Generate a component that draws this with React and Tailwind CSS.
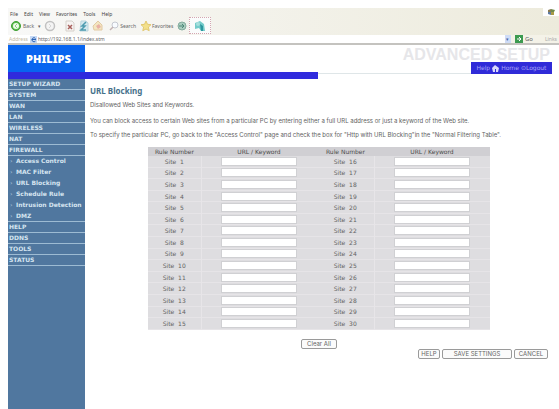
import { useState } from "react";

const menus = ["File", "Edit", "View", "Favorites", "Tools", "Help"];

const sections = [
  { name: "SETUP WIZARD" },
  { name: "SYSTEM" },
  { name: "WAN" },
  { name: "LAN" },
  { name: "WIRELESS" },
  { name: "NAT" },
  {
    name: "FIREWALL",
    items: [
      "Access Control",
      "MAC Filter",
      "URL Blocking",
      "Schedule Rule",
      "Intrusion Detection",
      "DMZ",
    ],
  },
  { name: "HELP" },
  { name: "DDNS" },
  { name: "TOOLS" },
  { name: "STATUS" },
];

const rows = Array.from({ length: 15 }, (_, i) => i + 1);

const BrowserBar = () => (
  <div className="pt-2 font-['Noto_Sans',sans-serif] text-[6px] leading-[8px] text-[#666]">
    <div className="bg-gradient-to-r from-[#f8f8f7] to-[#edebdc]">
      <div className="flex justify-between">
        <nav className="flex h-2 items-center gap-[6px] pl-[2px] pt-[3px] text-[5px] text-[#444]">
          {menus.map((m) => (
            <button key={m}>{m}</button>
          ))}
        </nav>
        <div className="flex h-2 w-4 items-center justify-center bg-white">
          <svg className="h-[6px] w-[7px]" viewBox="0 0 7 6">
            <path d="M0 1l3-1v3H0z" fill="#8a7a52" />
            <path d="M3 0l4 1-1 2H3z" fill="#6f8a4c" />
            <path d="M0 3h3v3L0 5z" fill="#5f7aa0" />
            <path d="M3 3h3v3H3z" fill="#a89a45" />
          </svg>
        </div>
      </div>

      <div className="flex h-[19px] items-center pl-[2px] text-[5px]">
        <button className="flex items-center gap-px">
          <svg className="size-3" viewBox="0 0 12 12">
            <circle cx="6" cy="6" r="4.500" fill="#5cbc4e" stroke="#3f9f35" />
            <circle cx="6" cy="6" r="3" fill="#eefaea" />
            <path d="M7 4L5 6l2 2" fill="none" stroke="#8fcf86" />
          </svg>
          Back
        </button>
        <span className="ml-1 w-1">▾</span>
        <button className="ml-[2px]" aria-label="Forward">
          <svg className="size-3" viewBox="0 0 12 12">
            <circle cx="6" cy="6" r="4.500" fill="#f4f4f4" stroke="#c2c2c2" strokeWidth="1.500" />
            <path d="M5 4l2 2-2 2" fill="none" stroke="#d6d6d6" />
          </svg>
        </button>
        <button className="ml-[9px]" aria-label="Stop">
          <svg className="h-3 w-[10px]" viewBox="0 0 10 12">
            <path d="M1 1h6l2 2v8H1z" fill="#f7f4f2" stroke="#d5d0ca" />
            <path d="M3 5l4 4M7 5L3 9" stroke="#a8605c" strokeWidth="1.500" />
          </svg>
        </button>
        <button className="ml-1" aria-label="Refresh">
          <svg className="h-3 w-[10px]" viewBox="0 0 10 12">
            <path d="M2 1h5l2 2v8H1z" fill="#d3e8ee" stroke="#b9d4de" />
            <path d="M7 2L3 6h3L2 10h5" fill="none" stroke="#4d9bb0" strokeWidth="1.500" />
          </svg>
        </button>
        <button className="ml-[3px]" aria-label="Home">
          <svg className="size-[11px]" viewBox="0 0 11 11">
            <path d="M1 6l5-5 4 4v5H2z" fill="#f3e6c0" stroke="#e2c9a4" />
            <path d="M4 6l3-2 2 3-3 2z" fill="#e9b0a4" />
          </svg>
        </button>
        <button className="ml-[6px] flex items-center gap-px">
          <svg className="size-[10px]" viewBox="0 0 10 10">
            <circle cx="6" cy="4" r="3" fill="#f8fbff" stroke="#c4c8d0" />
            <path d="M4 6L1 9" stroke="#c4b2b2" strokeWidth="1.500" />
          </svg>
          Search
        </button>
        <button className="ml-1 flex items-center">
          <svg className="size-3" viewBox="0 0 12 12">
            <path d="M6 1l1.500 3.300 3.500.4-2.600 2.400.8 3.600L6 9l-3.200 1.700.8-3.600L1 4.700l3.500-.4z" fill="#f3e08a" stroke="#e2c870" />
          </svg>
          Favorites
        </button>
        <button className="ml-1" aria-label="History">
          <svg className="size-[10px]" viewBox="0 0 10 10">
            <circle cx="5" cy="5" r="4" fill="#a9cdbf" stroke="#86ad9f" />
            <path d="M2 5h5L5 3M7 5L5 7" fill="none" stroke="#4c8676" />
          </svg>
        </button>
        <button className="ml-[2px] flex h-[17px] w-[22px] items-center justify-center border border-dotted border-[#d4a6b0] bg-[#fafcfc]" aria-label="Messenger">
          <svg className="size-3" viewBox="0 0 12 12">
            <path d="M1 3l5-2 4 3 1 7H7L5 8 1 9z" fill="#74cccb" />
            <path d="M6 4l3 2v5H7z" fill="#2c979f" />
            <circle cx="4" cy="4" r="2" fill="#a6e0dd" />
          </svg>
        </button>
      </div>
    </div>

    <div className="flex h-[8px] items-center bg-white">
      <label htmlFor="address" className="w-[22px] pl-px text-[5px] text-[#c4b9a4]">
        Address
      </label>
      <svg className="size-[7px]" viewBox="0 0 7 7">
        <path d="M0 0h7v7H0z" fill="#c7daf5" />
        <path d="M5.500 2.500a2 2 0 1 0 0 2.500M2 3.500h4" fill="none" stroke="#2e64b4" />
      </svg>
      <input
        id="address"
        defaultValue="http://192.168.1.1/index.stm"
        className="h-2 min-w-0 flex-1 bg-white px-[1px] text-[5px] outline-none"
      />
      <span className="w-[6px] bg-[#cfdcf6] text-center text-[5px] text-[#4668aa]">▾</span>
      <button className="flex h-2 items-center gap-[2px] bg-[#f4f2e8] pl-1">
        <svg className="size-[8px]" viewBox="0 0 8 8">
          <path d="M0 0h8v8H0z" fill="#3c9a50" />
          <path d="M2 4h4L4 2M6 4L4 6" fill="none" stroke="#fff" />
        </svg>
        Go
      </button>
      <button className="h-2 bg-[#f4f2e8] pl-3 pr-[2px] text-[5px] text-[#aaa]">Links</button>
    </div>
    <div className="h-[2px] bg-[#c4c3bf]" />
  </div>
);

const Header = () => (
  <header className="flex h-[34px]">
    <div className="flex w-[310px] flex-col">
      <div className="flex w-[77px] flex-1 items-center justify-center bg-[#0865f0] pl-1 font-['Noto_Sans',sans-serif] text-[11px] font-black leading-[12px] text-white">
        PHILIPS
      </div>
      <div className="h-[7px] bg-[#302bdd]" />
    </div>
    <div className="flex flex-1 flex-col items-end pr-[7px]">
      <h1 className="h-[17px] whitespace-nowrap pr-[2px] pt-px font-['Liberation_Sans',sans-serif] text-[16px] font-bold leading-[17px] text-[#e6e6e9]">
        ADVANCED SETUP
      </h1>
      <div className="flex w-full items-end">
        <div className="h-px flex-1 bg-[#dfe6e8]" />
        <nav className="flex h-3 w-[81px] items-center justify-center gap-[2px] bg-[#302bd8] text-[6px] leading-[12px] text-[#a9a6f7]">
          <a href="#help">Help</a>
          <svg className="size-[7px]" viewBox="0 0 7 7">
            <path d="M0 3l3-3 4 3-1 4H1z" fill="#d9d8fb" />
            <path d="M3 4h1v3H3z" fill="#302bd8" />
          </svg>
          <a href="#home">Home</a>
          <a href="#logout">⊙Logout</a>
        </nav>
      </div>
    </div>
  </header>
);

const Sidebar = () => (
  <aside className="w-[77px] shrink-0 bg-[#50779f] text-[6px] font-bold leading-[10px] text-[#d5e4f0]">
    {sections.map((s) => (
      <div key={s.name} className="border-b border-[#9dbbd3]">
        <a href="#section" className="block pl-px">
          {s.name}
        </a>
        {s.items && (
          <ul className="border-t border-[#9dbbd3]">
            {s.items.map((item, i) => (
              <li
                key={item}
                className={i === s.items.length - 1 ? "flex h-[10px]" : "flex h-[11px]"}
              >
                <span className="w-2 pl-[2px] text-[#a2bdd3]">›</span>
                <a href="#item" className="whitespace-nowrap">
                  {item}
                </a>
              </li>
            ))}
          </ul>
        )}
      </div>
    ))}
  </aside>
);

const SiteCells = ({ n, value, onChange }) => (
  <>
    <td className="border-r border-[#e7e5e8] p-0 text-center">
      <label htmlFor={`site-${n}`} className="whitespace-pre">
        {`Site  ${n}`}
      </label>
    </td>
    <td className="p-0 text-center">
      <input
        id={`site-${n}`}
        value={value}
        onChange={onChange}
        className="mx-auto block h-[9px] w-[76px] border border-[#d0d0d3] bg-white px-px outline-none"
      />
    </td>
  </>
);

const buttonStyle =
  "flex h-[10px] items-center justify-center rounded-[2px] border border-[#9a9a9a] bg-[#fbfbfb] text-[6px] leading-[8px] text-[#666]";

const App = () => {
  const [sites, setSites] = useState({});

  const update = (n) => (e) => setSites({ ...sites, [n]: e.target.value });

  return (
    <div className="flex min-h-screen flex-col bg-white pl-2 font-['DejaVu_Sans',sans-serif]">
      <BrowserBar />
      <Header />
      <div className="flex flex-1">
        <Sidebar />
        <main className="min-w-0 flex-1 pl-[5px] pr-[11px] font-['Inter',sans-serif] text-[6px] leading-[8px] text-[#626262]">
          <h2 className="pt-[7px] font-['Noto_Sans',sans-serif] text-[8px] font-bold leading-[10px] text-[#45708a]">
            URL Blocking
          </h2>
          <p className="mt-[5px]">Disallowed Web Sites and Keywords.</p>
          <p className="mt-2 whitespace-nowrap">
            You can block access to certain Web sites from a particular PC by entering either a full URL address or just a keyword of the Web site.
          </p>
          <p className="mt-[6px] whitespace-nowrap">
            To specify the particular PC, go back to the "Access Control" page and check the box for "Http with URL Blocking"in the "Normal Filtering Table".
          </p>

          <table className="ml-[58px] mt-2 h-[183px] w-[342px] table-fixed border-collapse bg-[#dedde0] font-['DejaVu_Sans',sans-serif] text-[6px] leading-[7px]">
            <thead>
              <tr className="h-[9px] bg-[#d0cfd3] text-[#4c4c4c]">
                <th className="w-[53px] p-0 font-normal">Rule Number</th>
                <th className="p-0 font-normal">URL / Keyword</th>
                <th className="w-[57px] p-0 font-normal">Rule Number</th>
                <th className="p-0 font-normal">URL / Keyword</th>
              </tr>
            </thead>
            <tbody>
              {rows.map((n) => (
                <tr key={n} className="border-b border-[#e6e4e7]">
                  <SiteCells n={n} value={sites[n] || ""} onChange={update(n)} />
                  <SiteCells n={n + 15} value={sites[n + 15] || ""} onChange={update(n + 15)} />
                </tr>
              ))}
            </tbody>
          </table>

          <div className="mt-[9px] flex pl-[211px]">
            <button onClick={() => setSites({})} className={`${buttonStyle} w-9`}>
              Clear All
            </button>
          </div>
          <div className="flex justify-end gap-[2px]">
            <button className={`${buttonStyle} w-[22px]`}>HELP</button>
            <button className={`${buttonStyle} w-[70px]`}>SAVE SETTINGS</button>
            <button className={`${buttonStyle} w-[34px]`}>CANCEL</button>
          </div>
        </main>
      </div>
    </div>
  );
};

export default App;
